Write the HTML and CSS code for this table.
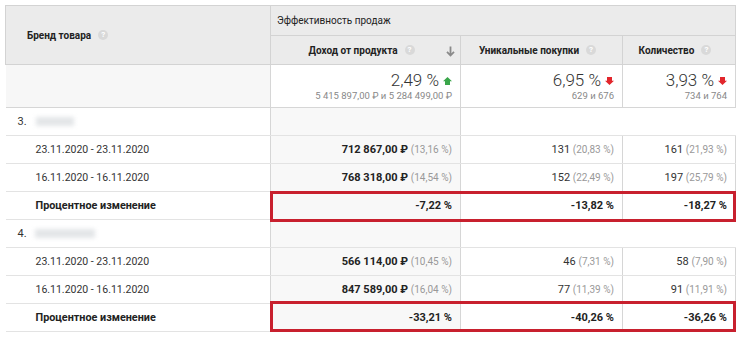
FILE: index.html
```html
<!DOCTYPE html>
<html lang="ru">
<head>
<meta charset="utf-8">
<link rel="stylesheet" href="styles.css">
</head>
<body>
<div class="page">
<table class="report">
  <colgroup>
    <col class="c-brand"><col class="c-rev"><col class="c-uniq"><col class="c-qty">
  </colgroup>
  <thead>
    <tr class="hr1">
      <th rowspan="2" class="h-brand"><span class="hlabel">Бренд товара <span class="help">?</span></span></th>
      <th colspan="3" class="h-group">Эффективность продаж</th>
    </tr>
    <tr class="hr2">
      <th class="h-col sorted-h"><span class="hlabel">Доход от продукта <span class="help">?</span></span>
        <svg class="sort" width="9" height="11" viewBox="0 0 9 11"><path d="M4.5 0.5v8.5M1 5.8l3.5 3.7 3.5-3.7" fill="none" stroke="#8a8a8a" stroke-width="1.8"/></svg>
      </th>
      <th class="h-col"><span class="hlabel">Уникальные покупки <span class="help">?</span></span></th>
      <th class="h-col"><span class="hlabel">Количество <span class="help">?</span></span></th>
    </tr>
  </thead>
  <tbody>
    <tr class="summary">
      <td class="brand"></td>
      <td class="num">
        <div class="big">2,49 % <svg class="arr" width="9" height="8" viewBox="0 0 9 8"><path d="M4.5 0L9 4.2H7V8H2V4.2H0Z" fill="#3aa64a"/></svg></div>
        <div class="sub">5 415 897,00 ₽ и 5 284 499,00 ₽</div>
      </td>
      <td class="num">
        <div class="big">6,95 % <svg class="arr" width="9" height="8" viewBox="0 0 9 8"><path d="M2 0H7V3.8H9L4.5 8L0 3.8H2Z" fill="#e2262c"/></svg></div>
        <div class="sub">629 и 676</div>
      </td>
      <td class="num">
        <div class="big">3,93 % <svg class="arr" width="9" height="8" viewBox="0 0 9 8"><path d="M2 0H7V3.8H9L4.5 8L0 3.8H2Z" fill="#e2262c"/></svg></div>
        <div class="sub">734 и 764</div>
      </td>
    </tr>

    <tr class="group">
      <td class="brand"><span class="idx">3.</span><span class="blur b1"></span></td>
      <td class="sorted"></td>
      <td colspan="2"></td>
    </tr>
    <tr class="row">
      <td class="brand sub-label">23.11.2020 - 23.11.2020</td>
      <td class="num sorted"><b>712 867,00 ₽</b> <span class="pct">(13,16 %)</span></td>
      <td class="num">131 <span class="pct">(20,83 %)</span></td>
      <td class="num">161 <span class="pct">(21,93 %)</span></td>
    </tr>
    <tr class="row">
      <td class="brand sub-label">16.11.2020 - 16.11.2020</td>
      <td class="num sorted"><b>768 318,00 ₽</b> <span class="pct">(14,54 %)</span></td>
      <td class="num">152 <span class="pct">(22,49 %)</span></td>
      <td class="num">197 <span class="pct">(25,79 %)</span></td>
    </tr>
    <tr class="row change hl-a">
      <td class="brand sub-label"><b>Процентное изменение</b></td>
      <td class="num sorted hl hl-first"><b>-7,22 %</b></td>
      <td class="num hl"><b>-13,82 %</b></td>
      <td class="num hl hl-last"><b>-18,27 %</b></td>
    </tr>

    <tr class="group">
      <td class="brand"><span class="idx">4.</span><span class="blur b2"></span></td>
      <td class="sorted"></td>
      <td colspan="2"></td>
    </tr>
    <tr class="row">
      <td class="brand sub-label">23.11.2020 - 23.11.2020</td>
      <td class="num sorted"><b>566 114,00 ₽</b> <span class="pct">(10,45 %)</span></td>
      <td class="num">46 <span class="pct">(7,31 %)</span></td>
      <td class="num">58 <span class="pct">(7,90 %)</span></td>
    </tr>
    <tr class="row">
      <td class="brand sub-label">16.11.2020 - 16.11.2020</td>
      <td class="num sorted"><b>847 589,00 ₽</b> <span class="pct">(16,04 %)</span></td>
      <td class="num">77 <span class="pct">(11,39 %)</span></td>
      <td class="num">91 <span class="pct">(11,91 %)</span></td>
    </tr>
    <tr class="row change hl-b">
      <td class="brand sub-label"><b>Процентное изменение</b></td>
      <td class="num sorted hl hl-first"><b>-33,21 %</b></td>
      <td class="num hl"><b>-40,26 %</b></td>
      <td class="num hl hl-last"><b>-36,26 %</b></td>
    </tr>
  </tbody>
</table>
</div>
</body>
</html>
```

FILE: styles.css
```css
html, body {
  margin: 0;
  padding: 0;
  background: #ffffff;
}

.page {
  padding: 5px 0 0 5px;
  font-family: Roboto, "Liberation Sans", Arial, sans-serif;
  color: #222;
}

.report {
  border-collapse: collapse;
  table-layout: fixed;
  width: 730px;
}

.c-brand { width: 265px; }
.c-rev { width: 190px; }
.c-uniq { width: 162px; }
.c-qty { width: 113px; }

.report th {
  background: #ebebeb;
  border: 1px solid #d3d3d3;
  font-size: 10px;
  color: #222;
  padding: 0;
}

.hr1 th { height: 29px; }
.hr2 th { height: 28px; }

.h-brand {
  text-align: left;
  font-weight: 700;
  padding-left: 21px !important;
}

.h-group {
  text-align: left;
  font-weight: 400;
  padding-left: 6px !important;
}

.h-col {
  font-weight: 700;
  text-align: center;
  position: relative;
  padding-right: 8px !important;
}

.hlabel {
  display: inline-flex;
  align-items: center;
  gap: 7px;
}

.help {
  display: inline-flex;
  align-items: center;
  justify-content: center;
  width: 10px;
  height: 10px;
  border-radius: 50%;
  background: #d9d9d9;
  color: #fff;
  font-size: 8px;
  font-weight: 700;
  line-height: 1;
}

.sort {
  position: absolute;
  right: 5px;
  top: 10px;
}

.report td {
  border-top: 1px solid #e3e3e3;
  border-bottom: 1px solid #e3e3e3;
  border-left: 1px solid #d6d6d6;
  border-right: 1px solid #d6d6d6;
  font-size: 11px;
  padding: 0 8px;
  height: 27px;
  white-space: nowrap;
}

.report td.brand {
  border-left: none;
}

.summary td {
  height: 42px;
  vertical-align: middle;
  border-bottom: 1px solid #d6d6d6;
}

.summary td.brand {
  background: #f7f7f7;
}

.big {
  font-size: 17px;
  font-weight: 300;
  color: #333;
  line-height: 18px;
  display: flex;
  justify-content: flex-end;
  align-items: center;
  gap: 4px;
}

.arr { margin-top: 2px; }

.sub {
  font-size: 9.5px;
  color: #888;
  text-align: right;
  line-height: 12px;
  margin-top: 1px;
}

.num {
  text-align: right;
  color: #333;
}

.num b {
  color: #222;
  font-weight: 700;
}

.pct {
  color: #999;
  font-size: 10px;
}

.sorted {
  background: #f8f8f8;
}

.summary .sorted { background: #fff; }

.group td {
  border-right: none;
}

.group td.sorted {
  border-right: 1px solid #d6d6d6;
}

.idx {
  display: inline-block;
  margin-left: 4px;
  color: #333;
  vertical-align: middle;
}

.blur {
  display: inline-block;
  vertical-align: middle;
  height: 9px;
  background: #e3e6e8;
  filter: blur(2px);
  margin-left: 9px;
}

.b1 { width: 38px; }
.b2 { width: 60px; margin-left: 8px; }

.sub-label {
  padding-left: 30px !important;
  color: #333;
  font-size: 10.5px !important;
}

.sub-label b {
  color: #222;
  font-size: 10.8px;
}

.hl {
  position: relative;
}

.hl::after {
  content: "";
  position: absolute;
  left: -1px;
  right: -1px;
  top: -1px;
  bottom: -3px;
  border-top: 3px solid #c8202e;
  border-bottom: 3px solid #c8202e;
  pointer-events: none;
}

.hl-b .hl::after {
  top: -3px;
  bottom: -1px;
}

.hl-first::after { border-left: 3px solid #c8202e; }
.hl-last::after { border-right: 3px solid #c8202e; }
```
